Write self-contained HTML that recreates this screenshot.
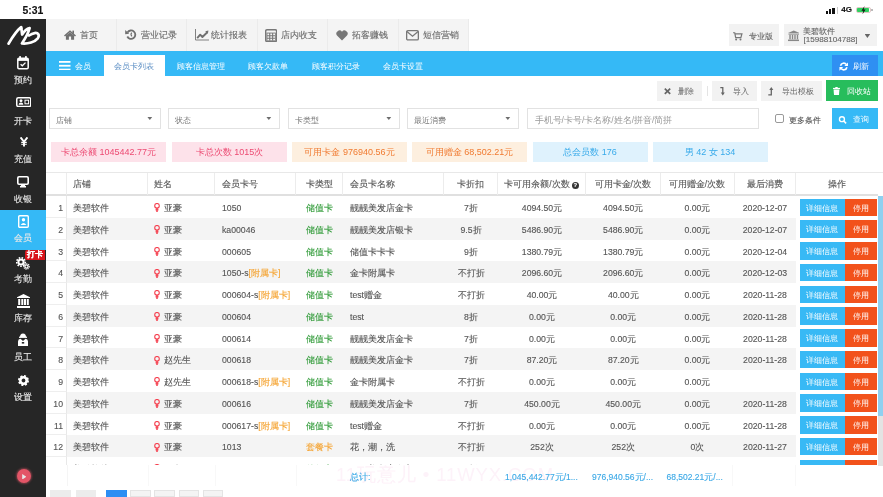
<!DOCTYPE html>
<html><head><meta charset="utf-8">
<style>
*{box-sizing:border-box;margin:0;padding:0}
html,body{width:883px;height:497px;overflow:hidden;background:#fff;font-family:"Liberation Sans",sans-serif;color:#555}
.a{position:absolute}
.z{font-size:1em}
#root *{-webkit-text-stroke:0.12px}
#root .db,#root .db *,#root .bt,#root .bt *,#root .tb,#root .tb *,#root .pill,#root .pill *,#root .sel,#root .sel *{-webkit-text-stroke:0}
#status{left:0;top:0;width:883px;height:19px;background:#fff}
#side{left:0;top:19px;width:46px;height:478px;background:#262626}
.si{position:absolute;left:0;width:46px;text-align:center;color:#e8e8e8;font-size:9px;line-height:10px}
.si svg{position:absolute}
#nav{left:46px;top:19px;width:423px;height:32px;background:#f4f4f4}
.nt{position:absolute;top:0;height:32px;width:70.5px;border-right:1px solid #ebebeb;color:#6a6a6a;font-size:9px;line-height:32px}
.nt svg{position:absolute}
.nt>span{position:absolute;top:0}
#bar{left:46px;top:51px;width:837px;height:25px;background:#35b9f6}
.bt{position:absolute;top:9.7px;color:#fff;font-size:8.4px;line-height:10px}
.tb{top:0;font-size:8.4px;line-height:21px}
.btn{position:absolute;height:21px;background:#f2f2f2;color:#555;font-size:8.5px;line-height:21px}
.sel{position:absolute;top:108px;height:20.5px;width:112px;border:1px solid #e2e2e2;background:#fff;color:#777;font-size:8.4px;line-height:19px;padding-left:5.8px;padding-top:1.6px}
.sel i{position:absolute;right:7.4px;top:7.6px;width:5.6px;height:3.5px;background:#6e6e6e;clip-path:polygon(0 0,100% 0,50% 100%)}
.pill{position:absolute;top:142px;height:20px;width:115px;text-align:center;font-size:9px;line-height:20px}
.pk{background:#fde2ea;color:#ec4a72}
.or{background:#fdefdf;color:#f07a30}
.bl{background:#dff2fd;color:#37aaea}
#thead{left:46px;top:172px;width:832px;height:24px;border-top:1px solid #e8e8e8;border-bottom:2px solid #e0e0e0;background:#fff}
.th{position:absolute;top:0;height:22px;line-height:22px;font-size:8.5px;color:#555;border-right:1px solid #ececec}
.row{position:absolute;left:46px;width:832px;height:21.75px;font-size:8.7px;color:#555}
.row.g .c{background:#f4f4f4}
.c{position:absolute;top:0;height:100%;line-height:24.3px;white-space:nowrap}
.num{left:0;width:21px;text-align:right;padding-right:3px;background:#fff!important;border-right:1px solid #e8e8e8;border-bottom:1px solid #eee}
.ctr{text-align:center}
.green{color:#2f9a37}
.orange{color:#f5a433}
.db{position:absolute;top:2.5px;height:17.5px;line-height:18.5px;color:#fff;font-size:8.4px;text-align:center}
</style></head><body><div id="root" style="position:absolute;left:0;top:0;width:883px;height:497px;overflow:hidden;will-change:transform">

<!-- status bar -->
<div id="status" class="a">
  <div class="a" style="left:22.5px;top:3.6px;font-size:10.4px;font-weight:bold;color:#111;line-height:13px">5:31</div>
  <div class="a" style="left:826.2px;top:10.6px;width:2px;height:3.2px;background:#111"></div>
  <div class="a" style="left:829.2px;top:9.2px;width:2.2px;height:4.6px;background:#111"></div>
  <div class="a" style="left:832.4px;top:8px;width:2.4px;height:5.8px;background:#111"></div>
  <div class="a" style="left:837px;top:6.6px;width:1.2px;height:7.2px;background:#c8c8c8"></div>
  <div class="a" style="left:841.3px;top:4.2px;font-size:8px;font-weight:bold;color:#111;line-height:12px">4G</div>
  <div class="a" style="left:855.8px;top:6.5px;width:14.8px;height:6.8px;border:0.8px solid #e0c8c8;border-radius:2px;background:#fff"></div>
  <div class="a" style="left:857px;top:7.7px;width:12.4px;height:4.4px;background:#2fcf5f;border-radius:0.8px"></div>
  <div class="a" style="left:871.3px;top:9.1px;width:1.4px;height:1.8px;background:#bbb"></div>
  <svg class="a" style="left:861.2px;top:5.6px" width="5" height="8.4" viewBox="0 0 5 8.4"><path d="M3.6 0 L0.4 4.7 H2.4 L1.4 8.4 L4.6 3.6 H2.6 Z" fill="#111"/></svg>
</div>

<!-- sidebar -->
<div id="side" class="a">
  <svg class="a" style="left:4px;top:3px" width="40" height="28" viewBox="0 0 710 497">
    <path d="M80 385 C140 285 215 160 305 92 L322 222 C360 160 405 118 455 108 C430 200 372 300 318 380 C425 392 550 352 600 290 C638 235 605 186 545 196 C505 203 470 222 445 240" fill="none" stroke="#fff" stroke-width="48" stroke-linecap="round" stroke-linejoin="round"/><path d="M230 160 L300 80 L340 110 Z" fill="#fff"/>
  </svg>
  <!--sideitems-->
  <div class="si" style="top:37px;height:40px">
    <svg style="left:17px;top:0" width="12" height="13.5" viewBox="0 0 12 13.5"><rect x="0.8" y="2.3" width="10.4" height="10.4" rx="1.2" fill="none" stroke="#fff" stroke-width="1.5"/><rect x="0.8" y="2.3" width="10.4" height="2.6" fill="#fff"/><rect x="2.2" y="0" width="1.8" height="3.5" rx="0.6" fill="#fff"/><rect x="8" y="0" width="1.8" height="3.5" rx="0.6" fill="#fff"/><path d="M3.6 8.2 L5.3 9.8 L8.5 6.6" fill="none" stroke="#fff" stroke-width="1.3"/></svg>
    <span class="a" style="left:0;width:46px;top:19px"><span class="z">预约</span></span>
  </div>
  <div class="si" style="top:78px;height:40px">
    <svg style="left:15.8px;top:0" width="15.5" height="10.2" viewBox="0 0 15.5 10.2"><rect x="0.75" y="0.75" width="14" height="8.7" rx="1.5" fill="none" stroke="#fff" stroke-width="1.5"/><circle cx="5" cy="3.7" r="1.5" fill="#fff"/><path d="M2.6 7.8 Q2.8 5.4 5 5.4 Q7.2 5.4 7.4 7.8 Z" fill="#fff"/><rect x="9" y="3.2" width="3.6" height="3.6" fill="none" stroke="#fff" stroke-width="1"/></svg>
    <span class="a" style="left:0;width:46px;top:19px"><span class="z">开卡</span></span>
  </div>
  <div class="si" style="top:118px;height:40px">
    <svg style="left:19.8px;top:0" width="8" height="9.5" viewBox="0 0 8 9.5"><path d="M0.6 0.4 L4 4.8 L7.4 0.4" fill="none" stroke="#fff" stroke-width="1.9"/><path d="M4 4.6 V9.5" stroke="#fff" stroke-width="1.9"/><path d="M1.2 5.4 H6.8 M1.2 7.3 H6.8" stroke="#fff" stroke-width="1.1"/></svg>
    <span class="a" style="left:0;width:46px;top:17px"><span class="z">充值</span></span>
  </div>
  <div class="si" style="top:157px;height:40px">
    <svg style="left:16.9px;top:0" width="12" height="11.5" viewBox="0 0 12 11.5"><rect x="0.8" y="0.8" width="10.4" height="7.4" rx="1.2" fill="none" stroke="#fff" stroke-width="1.6"/><path d="M4.2 8.5 H7.8 L8.3 10.2 H3.7 Z" fill="#fff"/><rect x="3" y="10" width="6" height="1.5" fill="#fff"/></svg>
    <span class="a" style="left:0;width:46px;top:18px"><span class="z">收银</span></span>
  </div>
  <div class="a" style="left:0;top:191px;width:46px;height:40px;background:#35b9f6"></div>
  <div class="si" style="top:196px;height:40px">
    <svg style="left:17.5px;top:0" width="11" height="13" viewBox="0 0 11 13"><rect x="0.7" y="0.7" width="9.6" height="11.6" rx="1" fill="none" stroke="#fff" stroke-width="1.4"/><circle cx="5.5" cy="4.8" r="1.7" fill="#fff"/><path d="M2.6 10 Q5.5 6.2 8.4 10 Z" fill="#fff"/><path d="M10.5 3 H11.5 M10.5 6 H11.5 M10.5 9 H11.5" stroke="#fff"/></svg>
    <span class="a" style="left:0;width:46px;top:18px"><span class="z">会员</span></span>
  </div>
  <div class="si" style="top:238px;height:40px">
    <svg style="left:16px;top:0" width="14" height="13" viewBox="0 0 14 13"><circle cx="5" cy="5" r="2.6" fill="none" stroke="#fff" stroke-width="2"/><circle cx="5" cy="5" r="4.3" fill="none" stroke="#fff" stroke-width="1.6" stroke-dasharray="1.6 1.3"/><circle cx="10.5" cy="9.5" r="1.6" fill="none" stroke="#fff" stroke-width="1.3"/><circle cx="10.5" cy="9.5" r="2.8" fill="none" stroke="#fff" stroke-width="1.1" stroke-dasharray="1.1 1"/></svg>
    <span class="a" style="left:0;width:46px;top:17px"><span class="z">考勤</span></span>
  </div>
  <div class="a" style="left:25.2px;top:231px;width:19.4px;height:9.8px;background:#d9141b;color:#fff;font-size:8px;line-height:10px;text-align:center;font-weight:bold;border-radius:2px 0 0 2px"><span class="z">打卡</span></div>
  <div class="si" style="top:275px;height:40px">
    <svg style="left:16.5px;top:0" width="13" height="14" viewBox="0 0 13 14"><path d="M6.5 0 L13 3.2 V4 H0 V3.2 Z" fill="#fff"/><rect x="1.2" y="5" width="2" height="6" fill="#fff"/><rect x="4.3" y="5" width="2" height="6" fill="#fff"/><rect x="7.0" y="5" width="2" height="6" fill="#fff"/><rect x="9.8" y="5" width="2" height="6" fill="#fff"/><rect x="0" y="12" width="13" height="2" fill="#fff"/></svg>
    <span class="a" style="left:0;width:46px;top:19px"><span class="z">库存</span></span>
  </div>
  <div class="si" style="top:314px;height:40px">
    <svg style="left:17px;top:0" width="12" height="13" viewBox="0 0 12 13"><path d="M3 4 Q3 0.5 6 0.5 Q9 0.5 9 4 Z" fill="#fff"/><rect x="2" y="3.6" width="8" height="1.3" fill="#fff"/><path d="M1 13 V8.5 Q1 6 3.5 5.8 L6 8 L8.5 5.8 Q11 6 11 8.5 V13 Z" fill="#fff"/><rect x="4.8" y="9" width="2.4" height="1.6" fill="#262626"/></svg>
    <span class="a" style="left:0;width:46px;top:19px"><span class="z">员工</span></span>
  </div>
  <div class="si" style="top:356px;height:40px">
    <svg style="left:17.5px;top:0" width="11" height="11" viewBox="0 0 11 11"><circle cx="5.5" cy="5.5" r="3.2" fill="none" stroke="#fff" stroke-width="2.6"/><circle cx="5.5" cy="5.5" r="4.6" fill="none" stroke="#fff" stroke-width="1.8" stroke-dasharray="2 1.6"/></svg>
    <span class="a" style="left:0;width:46px;top:17px"><span class="z">设置</span></span>
  </div>
  <div class="a" style="left:16.5px;top:450.3px;width:14px;height:14px;border-radius:50%;background:#e35567;box-shadow:0 0 2px 1px rgba(228,90,106,0.45)"></div>
  <svg class="a" style="left:21.6px;top:454.6px" width="4.6" height="5.6" viewBox="0 0 6 8"><path d="M0 0 L6 4 L0 8 Z" fill="#e8e8e8"/></svg>
</div>

<!-- nav -->
<div id="nav" class="a">
  <div class="nt" style="left:0"><svg style="left:18px;top:11.2px" width="12" height="9.8" viewBox="0 0 12 9.8"><path d="M0 5.6 L6 0.2 L12 5.6 L11 6.6 L6 2.2 L1 6.6 Z" fill="#707070"/><rect x="8.4" y="0.6" width="1.6" height="3.2" fill="#707070"/><path d="M1.9 5.6 L6 2.4 L10.1 5.6 V9.8 H7.1 V6.6 H4.9 V9.8 H1.9 Z" fill="#707070"/></svg><span style="left:34px"><span class="z">首页</span></span></div>
  <div class="nt" style="left:70.5px"><svg style="left:8.5px;top:10px" width="11.5" height="11" viewBox="0 0 12 11"><path d="M2.6 3.4 A4.4 4.4 0 1 1 2.4 7.6" fill="none" stroke="#707070" stroke-width="1.9"/><path d="M0.2 0.8 L4.4 4.6 L0.2 5.2 Z" fill="#707070"/><path d="M7 3.6 Q5.4 5.6 7.2 7.4" fill="none" stroke="#707070" stroke-width="1.2"/></svg><span style="left:24.5px"><span class="z">营业记录</span></span></div>
  <div class="nt" style="left:141px"><svg style="left:8.2px;top:10px" width="14" height="11.5" viewBox="0 0 14 11.5"><path d="M0.5 0 V11 H14" fill="none" stroke="#808080" stroke-width="1"/><path d="M2.2 9.2 L5.2 5.7 L7.4 8 L12.3 3.2" fill="none" stroke="#707070" stroke-width="1.9" stroke-linejoin="round"/><path d="M10.2 2.2 L13.4 1.6 L12.9 4.8 Z" fill="#707070"/></svg><span style="left:24px"><span class="z">统计报表</span></span></div>
  <div class="nt" style="left:211.5px"><svg style="left:7.5px;top:9.5px" width="12.3" height="13.2" viewBox="0 0 12.3 13.2"><rect x="0.7" y="0.7" width="10.9" height="11.8" rx="1.2" fill="none" stroke="#777" stroke-width="1.4"/><rect x="1.5" y="3.6" width="9.3" height="8.2" fill="#777"/><path d="M2.4 4.6 H4.2 V6.2 H2.4Z M5.3 4.6 H7.1 V6.2 H5.3Z M8.2 4.6 H10 V6.2 H8.2Z M2.4 7.2 H4.2 V8.8 H2.4Z M5.3 7.2 H7.1 V8.8 H5.3Z M8.2 7.2 H10 V8.8 H8.2Z M2.4 9.8 H4.2 V11.2 H2.4Z M5.3 9.8 H7.1 V11.2 H5.3Z M8.2 9.8 H10 V11.2 H8.2Z" fill="#f4f4f4"/></svg><span style="left:23.5px"><span class="z">店内收支</span></span></div>
  <div class="nt" style="left:282px"><svg style="left:8px;top:10.5px" width="12" height="11" viewBox="0 0 12 11"><path d="M6 10.5 L1 5.5 A2.9 2.9 0 0 1 6 1.8 A2.9 2.9 0 0 1 11 5.5 Z" fill="#777"/></svg><span style="left:24px"><span class="z">拓客赚钱</span></span></div>
  <div class="nt" style="left:352.5px"><svg style="left:7.5px;top:11.2px" width="13" height="10.5" viewBox="0 0 13 10.5"><rect x="0.65" y="0.65" width="11.7" height="9.2" rx="1.2" fill="none" stroke="#777" stroke-width="1.3"/><path d="M0.9 1.6 L6.5 6.2 L12.1 1.6" fill="none" stroke="#777" stroke-width="1.3"/></svg><span style="left:24px"><span class="z">短信营销</span></span></div>
</div>
<div class="a" style="left:728.5px;top:24px;width:50.5px;height:22px;background:#f2f2f2;color:#6a6a6a;font-size:8.2px;line-height:22px">
  <svg class="a" style="left:4.5px;top:8px" width="9.5" height="8.5" viewBox="0 0 10 9"><path d="M0 0.8 H1.8 L2.8 6 H8.3 L9.4 2 H2.3" fill="none" stroke="#777" stroke-width="1.3"/><circle cx="3.3" cy="7.9" r="1.05" fill="#777"/><circle cx="7.9" cy="7.9" r="1.05" fill="#777"/></svg>
  <span class="a" style="left:20.2px;top:2px"><span class="z">专业版</span></span>
</div>
<div class="a" style="left:784px;top:24px;width:93px;height:22px;background:#f2f2f2;color:#666;font-size:8.1px;line-height:9.5px">
  <svg class="a" style="left:3.5px;top:6px" width="11.5" height="11.5" viewBox="0 0 13 12"><path d="M6.5 0 L13 3 H0 Z" fill="#888"/><rect x="0.5" y="3.5" width="12" height="1.2" fill="#888"/><rect x="1.5" y="5" width="1.6" height="5" fill="#888"/><rect x="4.3" y="5" width="1.6" height="5" fill="#888"/><rect x="7.1" y="5" width="1.6" height="5" fill="#888"/><rect x="9.9" y="5" width="1.6" height="5" fill="#888"/><rect x="0" y="10.3" width="13" height="1.7" fill="#888"/></svg>
  <span class="a" style="left:18.8px;top:3px"><span class="z">美碧软件</span></span>
  <span class="a" style="left:19.6px;top:10.6px">[15988104788]</span>
  <i class="a" style="left:80.6px;top:10.1px;width:5.6px;height:4px;background:#666;clip-path:polygon(0 0,100% 0,50% 100%)"></i>
</div>

<!-- blue bar -->
<div id="bar" class="a">
  <svg class="a" style="left:13px;top:9.5px" width="11.5" height="9.5" viewBox="0 0 11.5 9.5"><rect y="0" width="11.5" height="1.8" fill="#fff"/><rect y="3.85" width="11.5" height="1.8" fill="#fff"/><rect y="7.7" width="11.5" height="1.8" fill="#fff"/></svg>
  <span class="bt" style="left:29px"><span class="z">会员</span></span>
  <div class="a" style="left:58px;top:4px;width:61px;height:21px;background:#fff"></div>
  <span class="bt" style="left:67.5px;color:#5b8ec4"><span class="z">会员卡列表</span></span>
  <span class="bt" style="left:130.5px"><span class="z">顾客信息管理</span></span>
  <span class="bt" style="left:202px"><span class="z">顾客欠款单</span></span>
  <span class="bt" style="left:265.5px"><span class="z">顾客积分记录</span></span>
  <span class="bt" style="left:337px"><span class="z">会员卡设置</span></span>
  <div class="a" style="left:786px;top:4px;width:46px;height:21px;background:#2f8ff2">
    <svg class="a" style="left:6.5px;top:6.5px" width="9.5" height="9" viewBox="0 0 11 11"><path d="M1.6 4.6 A4 4 0 0 1 8.8 3.2" fill="none" stroke="#fff" stroke-width="2"/><path d="M9.4 6.4 A4 4 0 0 1 2.2 7.8" fill="none" stroke="#fff" stroke-width="2"/><path d="M10.8 0.4 V5 H6.2 Z" fill="#fff"/><path d="M0.2 10.6 V6 H4.8 Z" fill="#fff"/></svg>
    <span class="a tb" style="left:21px;top:1px;color:#fff"><span class="z">刷新</span></span>
  </div>
</div>

<!-- toolbar -->
<div class="btn" style="left:657px;top:80.5px;width:44.5px;height:20.5px;color:#666">
  <svg class="a" style="left:7px;top:7.8px" width="7" height="6.5" viewBox="0 0 7 6.5"><path d="M0.8 0.6 L6.2 5.9 M6.2 0.6 L0.8 5.9" stroke="#666" stroke-width="1.7"/></svg>
  <span class="a tb" style="left:20.5px"><span class="z">删除</span></span>
</div>
<div class="a" style="left:706.5px;top:86px;width:1px;height:9.5px;background:#e4e4e4"></div>
<div class="btn" style="left:712px;top:80.5px;width:44.5px;height:20.5px;color:#666">
  <svg class="a" style="left:8px;top:6.5px" width="6" height="8.5" viewBox="0 0 6 8.5"><path d="M0.3 0.7 H2.8 V6.5" fill="none" stroke="#666" stroke-width="1.3"/><path d="M0.8 5.6 H4.8 L2.8 8.5 Z" fill="#666"/></svg>
  <span class="a tb" style="left:20.5px"><span class="z">导入</span></span>
</div>
<div class="btn" style="left:761px;top:80.5px;width:60.5px;height:20.5px;color:#666">
  <svg class="a" style="left:7px;top:6.5px" width="6.5" height="8.5" viewBox="0 0 6.5 8.5"><path d="M0.3 7.8 H3.3 V2" fill="none" stroke="#666" stroke-width="1.3"/><path d="M1.3 2.9 H5.3 L3.3 0 Z" fill="#666"/></svg>
  <span class="a tb" style="left:21px"><span class="z">导出模板</span></span>
</div>
<div class="btn" style="left:826px;top:80px;width:52px;height:21px;background:#27bd5c;color:#fff">
  <svg class="a" style="left:7px;top:6.8px" width="7" height="8.2" viewBox="0 0 7 8.2"><rect x="0" y="0.9" width="7" height="1.2" fill="#fff"/><rect x="2.3" y="0" width="2.4" height="1.2" fill="#fff"/><path d="M0.6 2.6 H6.4 L6 8.2 H1 Z" fill="#fff"/></svg>
  <span class="a tb" style="left:20.8px;top:1px"><span class="z">回收站</span></span>
</div>

<!-- filters -->
<div class="sel" style="left:49px"><span class="z">店铺</span><i></i></div>
<div class="sel" style="left:168px"><span class="z">状态</span><i></i></div>
<div class="sel" style="left:288px"><span class="z">卡类型</span><i></i></div>
<div class="sel" style="left:407px"><span class="z">最近消费</span><i></i></div>
<div class="sel" style="left:527px;width:232px;color:#999;font-size:8.6px;padding-left:6.5px"><span class="z">手机号</span>/<span class="z">卡号</span>/<span class="z">卡名称</span>/<span class="z">姓名</span>/<span class="z">拼音</span>/<span class="z">简拼</span></div>
<div class="a" style="left:774.5px;top:114.4px;width:9.4px;height:8.6px;border:1px solid #999;border-radius:2px;background:#fff"></div>
<div class="a" style="left:788.5px;top:113.5px;font-size:8.4px;line-height:12px;color:#555"><span class="z">更多条件</span></div>
<div class="a" style="left:832px;top:108px;width:46px;height:20.5px;background:#35b9f6">
  <svg class="a" style="left:6.3px;top:7.5px" width="9.5" height="8" viewBox="0 0 10 10"><circle cx="4" cy="4" r="3.1" fill="none" stroke="#fff" stroke-width="1.7"/><path d="M6.3 6.3 L9.2 9.2" stroke="#fff" stroke-width="1.9"/></svg>
  <span class="a tb" style="left:21.3px;top:1.3px;color:#fff;line-height:20.5px"><span class="z">查询</span></span>
</div>

<!-- pills -->
<div class="pill pk" style="left:51px"><span class="z">卡总余额</span> 1045442.77<span class="z">元</span></div>
<div class="pill pk" style="left:172px"><span class="z">卡总次数</span> 1015<span class="z">次</span></div>
<div class="pill or" style="left:292px"><span class="z">可用卡金</span> 976940.56<span class="z">元</span></div>
<div class="pill or" style="left:412px"><span class="z">可用赠金</span> 68,502.21<span class="z">元</span></div>
<div class="pill bl" style="left:532.5px"><span class="z">总会员数</span> 176</div>
<div class="pill bl" style="left:652.5px"><span class="z">男</span> 42 <span class="z">女</span> 134</div>

<!-- table header -->
<div id="thead" class="a">
  <div class="th" style="left:0;width:21px"></div>
  <div class="th" style="left:21px;width:81px;padding-left:6px"><span class="z">店铺</span></div>
  <div class="th" style="left:102px;width:67px;padding-left:6px"><span class="z">姓名</span></div>
  <div class="th" style="left:169px;width:81px;padding-left:7px"><span class="z">会员卡号</span></div>
  <div class="th ctr" style="left:250px;width:47px"><span class="z">卡类型</span></div>
  <div class="th" style="left:297px;width:101px;padding-left:7px"><span class="z">会员卡名称</span></div>
  <div class="th ctr" style="left:398px;width:54px"><span class="z">卡折扣</span></div>
  <div class="th ctr" style="left:452px;width:88px"><span class="z">卡可用余额</span>/<span class="z">次数</span> <b style="display:inline-block;width:7px;height:7px;border-radius:50%;background:#333;color:#fff;font-size:6px;line-height:7px;vertical-align:0">?</b></div>
  <div class="th ctr" style="left:540px;width:74.5px"><span class="z">可用卡金</span>/<span class="z">次数</span></div>
  <div class="th ctr" style="left:614.5px;width:74px"><span class="z">可用赠金</span>/<span class="z">次数</span></div>
  <div class="th ctr" style="left:688.5px;width:61px"><span class="z">最后消费</span></div>
  <div class="th ctr" style="left:749.5px;width:82.5px;border-right:0"><span class="z">操作</span></div>
</div>
<div class="a" style="left:878px;top:172px;width:5px;height:1px;background:#e8e8e8"></div>
<div id="rows" class="a" style="left:0;top:0;width:883px;height:464.5px;overflow:hidden"><div class="row" style="top:196.0px">
<div class="c num">1</div>
<div class="c" style="left:21px;width:81px;padding-left:6px"><span class="z">美碧软件</span></div>
<div class="c" style="left:102px;width:67px;padding-left:15.5px"><svg class="a" style="left:6.3px;top:7.3px" width="6" height="9" viewBox="0 0 6 9"><circle cx="3" cy="2.8" r="2.3" fill="none" stroke="#f5404f" stroke-width="1.1"/><path d="M3 5 V9" stroke="#f5404f" stroke-width="1.5"/><path d="M1.5 6.8 H4.5" stroke="#f5404f" stroke-width="1.2"/></svg><span class="z">亚豪</span></div>
<div class="c" style="left:169px;width:81px;padding-left:7px">1050</div>
<div class="c ctr green" style="left:250px;width:47px"><span class="z">储值卡</span></div>
<div class="c" style="left:297px;width:101px;padding-left:7px"><span class="z">靓靓美发店金卡</span></div>
<div class="c ctr" style="left:398px;width:54px">7<span class="z">折</span></div>
<div class="c ctr" style="left:452px;width:88px">4094.50<span class="z">元</span></div>
<div class="c ctr" style="left:540px;width:74.5px">4094.50<span class="z">元</span></div>
<div class="c ctr" style="left:614.5px;width:74px">0.00<span class="z">元</span></div>
<div class="c ctr" style="left:688.5px;width:61px">2020-12-07</div>
<div class="c" style="left:749.5px;width:82.5px;background:#fff!important"><div class="db" style="left:4px;width:45px;background:#38b9f5"><span class="z">详细信息</span></div><div class="db" style="left:49px;width:32px;background:#f2521b"><span class="z">停用</span></div></div>
</div>
<div class="row g" style="top:217.75px">
<div class="c num">2</div>
<div class="c" style="left:21px;width:81px;padding-left:6px"><span class="z">美碧软件</span></div>
<div class="c" style="left:102px;width:67px;padding-left:15.5px"><svg class="a" style="left:6.3px;top:7.3px" width="6" height="9" viewBox="0 0 6 9"><circle cx="3" cy="2.8" r="2.3" fill="none" stroke="#f5404f" stroke-width="1.1"/><path d="M3 5 V9" stroke="#f5404f" stroke-width="1.5"/><path d="M1.5 6.8 H4.5" stroke="#f5404f" stroke-width="1.2"/></svg><span class="z">亚豪</span></div>
<div class="c" style="left:169px;width:81px;padding-left:7px">ka00046</div>
<div class="c ctr green" style="left:250px;width:47px"><span class="z">储值卡</span></div>
<div class="c" style="left:297px;width:101px;padding-left:7px"><span class="z">靓靓美发店银卡</span></div>
<div class="c ctr" style="left:398px;width:54px">9.5<span class="z">折</span></div>
<div class="c ctr" style="left:452px;width:88px">5486.90<span class="z">元</span></div>
<div class="c ctr" style="left:540px;width:74.5px">5486.90<span class="z">元</span></div>
<div class="c ctr" style="left:614.5px;width:74px">0.00<span class="z">元</span></div>
<div class="c ctr" style="left:688.5px;width:61px">2020-12-07</div>
<div class="c" style="left:749.5px;width:82.5px;background:#fff!important"><div class="db" style="left:4px;width:45px;background:#38b9f5"><span class="z">详细信息</span></div><div class="db" style="left:49px;width:32px;background:#f2521b"><span class="z">停用</span></div></div>
</div>
<div class="row" style="top:239.5px">
<div class="c num">3</div>
<div class="c" style="left:21px;width:81px;padding-left:6px"><span class="z">美碧软件</span></div>
<div class="c" style="left:102px;width:67px;padding-left:15.5px"><svg class="a" style="left:6.3px;top:7.3px" width="6" height="9" viewBox="0 0 6 9"><circle cx="3" cy="2.8" r="2.3" fill="none" stroke="#f5404f" stroke-width="1.1"/><path d="M3 5 V9" stroke="#f5404f" stroke-width="1.5"/><path d="M1.5 6.8 H4.5" stroke="#f5404f" stroke-width="1.2"/></svg><span class="z">亚豪</span></div>
<div class="c" style="left:169px;width:81px;padding-left:7px">000605</div>
<div class="c ctr green" style="left:250px;width:47px"><span class="z">储值卡</span></div>
<div class="c" style="left:297px;width:101px;padding-left:7px"><span class="z">储值卡卡卡</span></div>
<div class="c ctr" style="left:398px;width:54px">9<span class="z">折</span></div>
<div class="c ctr" style="left:452px;width:88px">1380.79<span class="z">元</span></div>
<div class="c ctr" style="left:540px;width:74.5px">1380.79<span class="z">元</span></div>
<div class="c ctr" style="left:614.5px;width:74px">0.00<span class="z">元</span></div>
<div class="c ctr" style="left:688.5px;width:61px">2020-12-04</div>
<div class="c" style="left:749.5px;width:82.5px;background:#fff!important"><div class="db" style="left:4px;width:45px;background:#38b9f5"><span class="z">详细信息</span></div><div class="db" style="left:49px;width:32px;background:#f2521b"><span class="z">停用</span></div></div>
</div>
<div class="row g" style="top:261.25px">
<div class="c num">4</div>
<div class="c" style="left:21px;width:81px;padding-left:6px"><span class="z">美碧软件</span></div>
<div class="c" style="left:102px;width:67px;padding-left:15.5px"><svg class="a" style="left:6.3px;top:7.3px" width="6" height="9" viewBox="0 0 6 9"><circle cx="3" cy="2.8" r="2.3" fill="none" stroke="#f5404f" stroke-width="1.1"/><path d="M3 5 V9" stroke="#f5404f" stroke-width="1.5"/><path d="M1.5 6.8 H4.5" stroke="#f5404f" stroke-width="1.2"/></svg><span class="z">亚豪</span></div>
<div class="c" style="left:169px;width:81px;padding-left:7px">1050-s<span class="orange">[<span class="z">附属卡</span>]</span></div>
<div class="c ctr green" style="left:250px;width:47px"><span class="z">储值卡</span></div>
<div class="c" style="left:297px;width:101px;padding-left:7px"><span class="z">金卡附属卡</span></div>
<div class="c ctr" style="left:398px;width:54px"><span class="z">不打折</span></div>
<div class="c ctr" style="left:452px;width:88px">2096.60<span class="z">元</span></div>
<div class="c ctr" style="left:540px;width:74.5px">2096.60<span class="z">元</span></div>
<div class="c ctr" style="left:614.5px;width:74px">0.00<span class="z">元</span></div>
<div class="c ctr" style="left:688.5px;width:61px">2020-12-03</div>
<div class="c" style="left:749.5px;width:82.5px;background:#fff!important"><div class="db" style="left:4px;width:45px;background:#38b9f5"><span class="z">详细信息</span></div><div class="db" style="left:49px;width:32px;background:#f2521b"><span class="z">停用</span></div></div>
</div>
<div class="row" style="top:283.0px">
<div class="c num">5</div>
<div class="c" style="left:21px;width:81px;padding-left:6px"><span class="z">美碧软件</span></div>
<div class="c" style="left:102px;width:67px;padding-left:15.5px"><svg class="a" style="left:6.3px;top:7.3px" width="6" height="9" viewBox="0 0 6 9"><circle cx="3" cy="2.8" r="2.3" fill="none" stroke="#f5404f" stroke-width="1.1"/><path d="M3 5 V9" stroke="#f5404f" stroke-width="1.5"/><path d="M1.5 6.8 H4.5" stroke="#f5404f" stroke-width="1.2"/></svg><span class="z">亚豪</span></div>
<div class="c" style="left:169px;width:81px;padding-left:7px">000604-s<span class="orange">[<span class="z">附属卡</span>]</span></div>
<div class="c ctr green" style="left:250px;width:47px"><span class="z">储值卡</span></div>
<div class="c" style="left:297px;width:101px;padding-left:7px">test<span class="z">赠金</span></div>
<div class="c ctr" style="left:398px;width:54px"><span class="z">不打折</span></div>
<div class="c ctr" style="left:452px;width:88px">40.00<span class="z">元</span></div>
<div class="c ctr" style="left:540px;width:74.5px">40.00<span class="z">元</span></div>
<div class="c ctr" style="left:614.5px;width:74px">0.00<span class="z">元</span></div>
<div class="c ctr" style="left:688.5px;width:61px">2020-11-28</div>
<div class="c" style="left:749.5px;width:82.5px;background:#fff!important"><div class="db" style="left:4px;width:45px;background:#38b9f5"><span class="z">详细信息</span></div><div class="db" style="left:49px;width:32px;background:#f2521b"><span class="z">停用</span></div></div>
</div>
<div class="row g" style="top:304.75px">
<div class="c num">6</div>
<div class="c" style="left:21px;width:81px;padding-left:6px"><span class="z">美碧软件</span></div>
<div class="c" style="left:102px;width:67px;padding-left:15.5px"><svg class="a" style="left:6.3px;top:7.3px" width="6" height="9" viewBox="0 0 6 9"><circle cx="3" cy="2.8" r="2.3" fill="none" stroke="#f5404f" stroke-width="1.1"/><path d="M3 5 V9" stroke="#f5404f" stroke-width="1.5"/><path d="M1.5 6.8 H4.5" stroke="#f5404f" stroke-width="1.2"/></svg><span class="z">亚豪</span></div>
<div class="c" style="left:169px;width:81px;padding-left:7px">000604</div>
<div class="c ctr green" style="left:250px;width:47px"><span class="z">储值卡</span></div>
<div class="c" style="left:297px;width:101px;padding-left:7px">test</div>
<div class="c ctr" style="left:398px;width:54px">8<span class="z">折</span></div>
<div class="c ctr" style="left:452px;width:88px">0.00<span class="z">元</span></div>
<div class="c ctr" style="left:540px;width:74.5px">0.00<span class="z">元</span></div>
<div class="c ctr" style="left:614.5px;width:74px">0.00<span class="z">元</span></div>
<div class="c ctr" style="left:688.5px;width:61px">2020-11-28</div>
<div class="c" style="left:749.5px;width:82.5px;background:#fff!important"><div class="db" style="left:4px;width:45px;background:#38b9f5"><span class="z">详细信息</span></div><div class="db" style="left:49px;width:32px;background:#f2521b"><span class="z">停用</span></div></div>
</div>
<div class="row" style="top:326.5px">
<div class="c num">7</div>
<div class="c" style="left:21px;width:81px;padding-left:6px"><span class="z">美碧软件</span></div>
<div class="c" style="left:102px;width:67px;padding-left:15.5px"><svg class="a" style="left:6.3px;top:7.3px" width="6" height="9" viewBox="0 0 6 9"><circle cx="3" cy="2.8" r="2.3" fill="none" stroke="#f5404f" stroke-width="1.1"/><path d="M3 5 V9" stroke="#f5404f" stroke-width="1.5"/><path d="M1.5 6.8 H4.5" stroke="#f5404f" stroke-width="1.2"/></svg><span class="z">亚豪</span></div>
<div class="c" style="left:169px;width:81px;padding-left:7px">000614</div>
<div class="c ctr green" style="left:250px;width:47px"><span class="z">储值卡</span></div>
<div class="c" style="left:297px;width:101px;padding-left:7px"><span class="z">靓靓美发店金卡</span></div>
<div class="c ctr" style="left:398px;width:54px">7<span class="z">折</span></div>
<div class="c ctr" style="left:452px;width:88px">0.00<span class="z">元</span></div>
<div class="c ctr" style="left:540px;width:74.5px">0.00<span class="z">元</span></div>
<div class="c ctr" style="left:614.5px;width:74px">0.00<span class="z">元</span></div>
<div class="c ctr" style="left:688.5px;width:61px">2020-11-28</div>
<div class="c" style="left:749.5px;width:82.5px;background:#fff!important"><div class="db" style="left:4px;width:45px;background:#38b9f5"><span class="z">详细信息</span></div><div class="db" style="left:49px;width:32px;background:#f2521b"><span class="z">停用</span></div></div>
</div>
<div class="row g" style="top:348.25px">
<div class="c num">8</div>
<div class="c" style="left:21px;width:81px;padding-left:6px"><span class="z">美碧软件</span></div>
<div class="c" style="left:102px;width:67px;padding-left:15.5px"><svg class="a" style="left:6.3px;top:7.3px" width="6" height="9" viewBox="0 0 6 9"><circle cx="3" cy="2.8" r="2.3" fill="none" stroke="#f5404f" stroke-width="1.1"/><path d="M3 5 V9" stroke="#f5404f" stroke-width="1.5"/><path d="M1.5 6.8 H4.5" stroke="#f5404f" stroke-width="1.2"/></svg><span class="z">赵先生</span></div>
<div class="c" style="left:169px;width:81px;padding-left:7px">000618</div>
<div class="c ctr green" style="left:250px;width:47px"><span class="z">储值卡</span></div>
<div class="c" style="left:297px;width:101px;padding-left:7px"><span class="z">靓靓美发店金卡</span></div>
<div class="c ctr" style="left:398px;width:54px">7<span class="z">折</span></div>
<div class="c ctr" style="left:452px;width:88px">87.20<span class="z">元</span></div>
<div class="c ctr" style="left:540px;width:74.5px">87.20<span class="z">元</span></div>
<div class="c ctr" style="left:614.5px;width:74px">0.00<span class="z">元</span></div>
<div class="c ctr" style="left:688.5px;width:61px">2020-11-28</div>
<div class="c" style="left:749.5px;width:82.5px;background:#fff!important"><div class="db" style="left:4px;width:45px;background:#38b9f5"><span class="z">详细信息</span></div><div class="db" style="left:49px;width:32px;background:#f2521b"><span class="z">停用</span></div></div>
</div>
<div class="row" style="top:370.0px">
<div class="c num">9</div>
<div class="c" style="left:21px;width:81px;padding-left:6px"><span class="z">美碧软件</span></div>
<div class="c" style="left:102px;width:67px;padding-left:15.5px"><svg class="a" style="left:6.3px;top:7.3px" width="6" height="9" viewBox="0 0 6 9"><circle cx="3" cy="2.8" r="2.3" fill="none" stroke="#f5404f" stroke-width="1.1"/><path d="M3 5 V9" stroke="#f5404f" stroke-width="1.5"/><path d="M1.5 6.8 H4.5" stroke="#f5404f" stroke-width="1.2"/></svg><span class="z">赵先生</span></div>
<div class="c" style="left:169px;width:81px;padding-left:7px">000618-s<span class="orange">[<span class="z">附属卡</span>]</span></div>
<div class="c ctr green" style="left:250px;width:47px"><span class="z">储值卡</span></div>
<div class="c" style="left:297px;width:101px;padding-left:7px"><span class="z">金卡附属卡</span></div>
<div class="c ctr" style="left:398px;width:54px"><span class="z">不打折</span></div>
<div class="c ctr" style="left:452px;width:88px">0.00<span class="z">元</span></div>
<div class="c ctr" style="left:540px;width:74.5px">0.00<span class="z">元</span></div>
<div class="c ctr" style="left:614.5px;width:74px">0.00<span class="z">元</span></div>
<div class="c ctr" style="left:688.5px;width:61px"></div>
<div class="c" style="left:749.5px;width:82.5px;background:#fff!important"><div class="db" style="left:4px;width:45px;background:#38b9f5"><span class="z">详细信息</span></div><div class="db" style="left:49px;width:32px;background:#f2521b"><span class="z">停用</span></div></div>
</div>
<div class="row g" style="top:391.75px">
<div class="c num">10</div>
<div class="c" style="left:21px;width:81px;padding-left:6px"><span class="z">美碧软件</span></div>
<div class="c" style="left:102px;width:67px;padding-left:15.5px"><svg class="a" style="left:6.3px;top:7.3px" width="6" height="9" viewBox="0 0 6 9"><circle cx="3" cy="2.8" r="2.3" fill="none" stroke="#f5404f" stroke-width="1.1"/><path d="M3 5 V9" stroke="#f5404f" stroke-width="1.5"/><path d="M1.5 6.8 H4.5" stroke="#f5404f" stroke-width="1.2"/></svg><span class="z">亚豪</span></div>
<div class="c" style="left:169px;width:81px;padding-left:7px">000616</div>
<div class="c ctr green" style="left:250px;width:47px"><span class="z">储值卡</span></div>
<div class="c" style="left:297px;width:101px;padding-left:7px"><span class="z">靓靓美发店金卡</span></div>
<div class="c ctr" style="left:398px;width:54px">7<span class="z">折</span></div>
<div class="c ctr" style="left:452px;width:88px">450.00<span class="z">元</span></div>
<div class="c ctr" style="left:540px;width:74.5px">450.00<span class="z">元</span></div>
<div class="c ctr" style="left:614.5px;width:74px">0.00<span class="z">元</span></div>
<div class="c ctr" style="left:688.5px;width:61px">2020-11-28</div>
<div class="c" style="left:749.5px;width:82.5px;background:#fff!important"><div class="db" style="left:4px;width:45px;background:#38b9f5"><span class="z">详细信息</span></div><div class="db" style="left:49px;width:32px;background:#f2521b"><span class="z">停用</span></div></div>
</div>
<div class="row" style="top:413.5px">
<div class="c num">11</div>
<div class="c" style="left:21px;width:81px;padding-left:6px"><span class="z">美碧软件</span></div>
<div class="c" style="left:102px;width:67px;padding-left:15.5px"><svg class="a" style="left:6.3px;top:7.3px" width="6" height="9" viewBox="0 0 6 9"><circle cx="3" cy="2.8" r="2.3" fill="none" stroke="#f5404f" stroke-width="1.1"/><path d="M3 5 V9" stroke="#f5404f" stroke-width="1.5"/><path d="M1.5 6.8 H4.5" stroke="#f5404f" stroke-width="1.2"/></svg><span class="z">亚豪</span></div>
<div class="c" style="left:169px;width:81px;padding-left:7px">000617-s<span class="orange">[<span class="z">附属卡</span>]</span></div>
<div class="c ctr green" style="left:250px;width:47px"><span class="z">储值卡</span></div>
<div class="c" style="left:297px;width:101px;padding-left:7px">test<span class="z">赠金</span></div>
<div class="c ctr" style="left:398px;width:54px"><span class="z">不打折</span></div>
<div class="c ctr" style="left:452px;width:88px">0.00<span class="z">元</span></div>
<div class="c ctr" style="left:540px;width:74.5px">0.00<span class="z">元</span></div>
<div class="c ctr" style="left:614.5px;width:74px">0.00<span class="z">元</span></div>
<div class="c ctr" style="left:688.5px;width:61px">2020-11-28</div>
<div class="c" style="left:749.5px;width:82.5px;background:#fff!important"><div class="db" style="left:4px;width:45px;background:#38b9f5"><span class="z">详细信息</span></div><div class="db" style="left:49px;width:32px;background:#f2521b"><span class="z">停用</span></div></div>
</div>
<div class="row g" style="top:435.25px">
<div class="c num">12</div>
<div class="c" style="left:21px;width:81px;padding-left:6px"><span class="z">美碧软件</span></div>
<div class="c" style="left:102px;width:67px;padding-left:15.5px"><svg class="a" style="left:6.3px;top:7.3px" width="6" height="9" viewBox="0 0 6 9"><circle cx="3" cy="2.8" r="2.3" fill="none" stroke="#f5404f" stroke-width="1.1"/><path d="M3 5 V9" stroke="#f5404f" stroke-width="1.5"/><path d="M1.5 6.8 H4.5" stroke="#f5404f" stroke-width="1.2"/></svg><span class="z">亚豪</span></div>
<div class="c" style="left:169px;width:81px;padding-left:7px">1013</div>
<div class="c ctr orange" style="left:250px;width:47px"><span class="z">套餐卡</span></div>
<div class="c" style="left:297px;width:101px;padding-left:7px"><span class="z">花，潮，洗</span></div>
<div class="c ctr" style="left:398px;width:54px"><span class="z">不打折</span></div>
<div class="c ctr" style="left:452px;width:88px">252<span class="z">次</span></div>
<div class="c ctr" style="left:540px;width:74.5px">252<span class="z">次</span></div>
<div class="c ctr" style="left:614.5px;width:74px">0<span class="z">次</span></div>
<div class="c ctr" style="left:688.5px;width:61px">2020-11-27</div>
<div class="c" style="left:749.5px;width:82.5px;background:#fff!important"><div class="db" style="left:4px;width:45px;background:#38b9f5"><span class="z">详细信息</span></div><div class="db" style="left:49px;width:32px;background:#f2521b"><span class="z">停用</span></div></div>
</div>
<div class="row" style="top:457.0px">
<div class="c num">13</div>
<div class="c" style="left:21px;width:81px;padding-left:6px"><span class="z">美碧软件</span></div>
<div class="c" style="left:102px;width:67px;padding-left:15.5px"><svg class="a" style="left:6.3px;top:7.3px" width="6" height="9" viewBox="0 0 6 9"><circle cx="3" cy="2.8" r="2.3" fill="none" stroke="#f5404f" stroke-width="1.1"/><path d="M3 5 V9" stroke="#f5404f" stroke-width="1.5"/><path d="M1.5 6.8 H4.5" stroke="#f5404f" stroke-width="1.2"/></svg><span class="z">亚豪</span></div>
<div class="c" style="left:169px;width:81px;padding-left:7px">1014</div>
<div class="c ctr green" style="left:250px;width:47px"><span class="z">储值卡</span></div>
<div class="c" style="left:297px;width:101px;padding-left:7px"><span class="z">靓靓美发店金卡</span></div>
<div class="c ctr" style="left:398px;width:54px">7<span class="z">折</span></div>
<div class="c ctr" style="left:452px;width:88px">0.00<span class="z">元</span></div>
<div class="c ctr" style="left:540px;width:74.5px">0.00<span class="z">元</span></div>
<div class="c ctr" style="left:614.5px;width:74px">0.00<span class="z">元</span></div>
<div class="c ctr" style="left:688.5px;width:61px">2020-11-27</div>
<div class="c" style="left:749.5px;width:82.5px;background:#fff!important"><div class="db" style="left:4px;width:45px;background:#38b9f5"><span class="z">详细信息</span></div><div class="db" style="left:49px;width:32px;background:#f2521b"><span class="z">停用</span></div></div>
</div></div><!--/rows-->
<div class="a" style="left:878px;top:196px;width:5px;height:270px;background:#8fd0f0"></div>

<!--footer-->
<div class="a" style="left:878px;top:416px;width:5px;height:50px;background:#e3e3e3"></div>
<div class="a" style="left:46px;top:465px;width:832px;height:22px;background:#fff">
  <div class="a" style="left:21px;top:0;width:1px;height:21px;background:#f5f5f5"></div>
  <div class="a" style="left:102px;top:0;width:1px;height:21px;background:#f8f8f8"></div>
  <div class="a" style="left:169px;top:0;width:1px;height:21px;background:#f8f8f8"></div>
  <div class="a" style="left:250px;top:0;width:1px;height:21px;background:#f8f8f8"></div>
  <div class="a" style="left:686px;top:0;width:1px;height:21px;background:#f8f8f8"></div>
  <div class="a" style="left:749px;top:0;width:1px;height:21px;background:#f8f8f8"></div>
</div>
<div class="a" style="left:336px;top:462.5px;font-size:18.5px;line-height:24px;color:#fdf2f9;white-space:nowrap;letter-spacing:0.9px;-webkit-text-stroke:0">11<span class="z">玩意儿</span> <span class="z">•</span> 11WYX.COM</div>
<div class="a" style="left:350px;top:472px;font-size:8.5px;line-height:10px;color:#3aa8e6"><span class="z">总计</span>:</div>
<div class="a" style="left:505px;top:472px;font-size:8.5px;line-height:10px;color:#3aa8e6">1,045,442.77<span class="z">元</span>/1...</div>
<div class="a" style="left:592px;top:472px;font-size:8.5px;line-height:10px;color:#3aa8e6">976,940.56<span class="z">元</span>/...</div>
<div class="a" style="left:666.5px;top:472px;font-size:8.5px;line-height:10px;color:#3aa8e6">68,502.21<span class="z">元</span>/...</div>
<!--pagination-->
<div class="a" style="left:50px;top:490px;width:20.5px;height:7px;background:#ececec"></div>
<div class="a" style="left:75.5px;top:490px;width:20.5px;height:7px;background:#ececec"></div>
<div class="a" style="left:106px;top:490px;width:20.5px;height:7px;background:#2d8ef3"></div>
<div class="a" style="left:130px;top:490px;width:20.5px;height:7px;background:#f4f4f4;border:1px solid #e4e4e4"></div>
<div class="a" style="left:154px;top:490px;width:20.5px;height:7px;background:#f4f4f4;border:1px solid #e4e4e4"></div>
<div class="a" style="left:178.5px;top:490px;width:20.5px;height:7px;background:#f4f4f4;border:1px solid #e4e4e4"></div>
<div class="a" style="left:202.5px;top:490px;width:20.5px;height:7px;background:#f4f4f4;border:1px solid #e4e4e4"></div>
</div></body></html>
